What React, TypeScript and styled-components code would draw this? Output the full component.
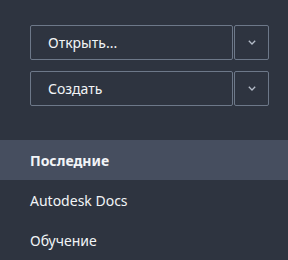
import React from "react";
import styled, { createGlobalStyle } from "styled-components";

const Global = createGlobalStyle`
  html, body { margin: 0; padding: 0; background: #2e3440; }
  body { font-family: "Noto Sans", "Open Sans", sans-serif; }
`;

const Panel = styled.div`
  width: 288px;
  height: 260px;
  background: #2e3440;
  display: flex;
  flex-direction: column;
  overflow: hidden;
`;

const Actions = styled.div`
  display: flex;
  flex-direction: column;
  gap: 11px;
  padding: 25px 19px 0 30px;
`;

const Split = styled.div`
  display: flex;
  height: 35px;
`;

const MainButton = styled.button`
  flex: 1;
  height: 100%;
  box-sizing: border-box;
  background: transparent;
  border: 1px solid #6d7889;
  border-radius: 2px;
  color: #f2f4f7;
  font-family: inherit;
  font-size: 14px;
  text-align: left;
  padding: 0 0 0 17px;
  margin: 0;
`;

const ArrowButton = styled.button`
  width: 35px;
  height: 100%;
  box-sizing: border-box;
  background: transparent;
  border: 1px solid #6d7889;
  border-radius: 2px;
  margin: 0 0 0 1px;
  padding: 0;
  display: flex;
  align-items: center;
  justify-content: center;
  color: #b4bcc8;
`;

const Nav = styled.nav`
  display: flex;
  flex-direction: column;
  margin-top: 34px;
`;

const NavItem = styled.div<{ $active?: boolean }>`
  height: 40px;
  display: flex;
  align-items: center;
  padding-left: 30px;
  font-size: 14px;
  color: #f2f4f7;
  font-weight: ${(p) => (p.$active ? 700 : 400)};
  background: ${(p) => (p.$active ? "#464e5f" : "transparent")};
`;

const Chevron = () => (
  <svg width="8" height="5" viewBox="0 0 8 5" fill="none">
    <path d="M0.8 0.8 L4 4 L7.2 0.8" stroke="currentColor" strokeWidth="1.3" />
  </svg>
);

export default function App() {
  return (
    <Panel>
      <Global />
      <Actions>
        <Split>
          <MainButton>Открыть...</MainButton>
          <ArrowButton aria-label="more"><Chevron /></ArrowButton>
        </Split>
        <Split>
          <MainButton>Создать</MainButton>
          <ArrowButton aria-label="more"><Chevron /></ArrowButton>
        </Split>
      </Actions>
      <Nav>
        <NavItem $active>Последние</NavItem>
        <NavItem>Autodesk Docs</NavItem>
        <NavItem>Обучение</NavItem>
      </Nav>
    </Panel>
  );
}
